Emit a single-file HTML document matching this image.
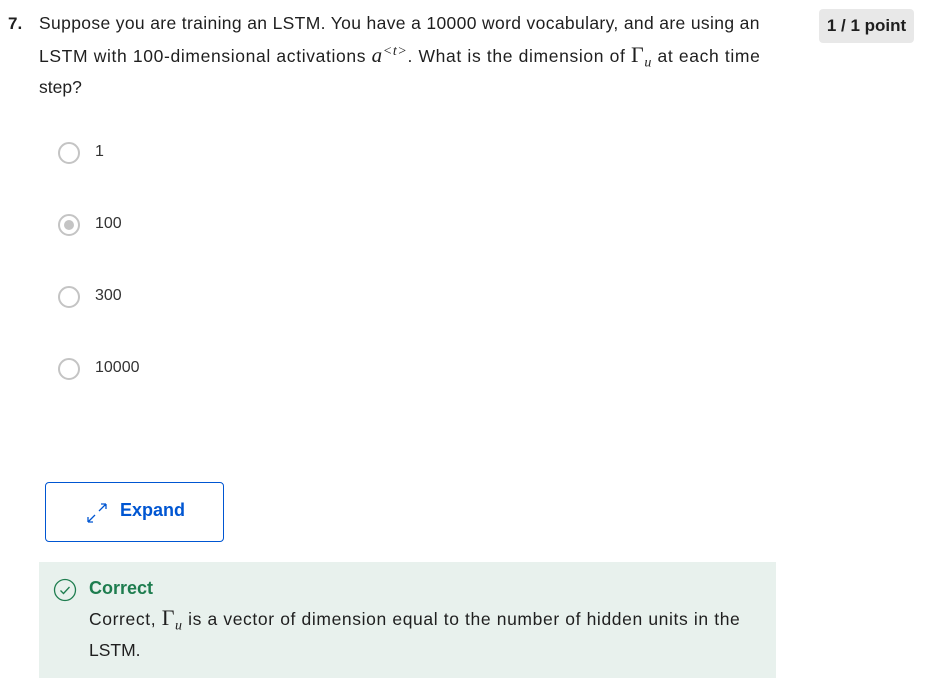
<!DOCTYPE html>
<html><head><style>
body{margin:0;width:925px;height:680px;background:#fff;font-family:"Liberation Sans",sans-serif;color:#1f1f1f;position:relative;overflow:hidden}
.a{position:absolute}
.q{left:39px;top:8px;width:780px;font-size:17.5px;line-height:31px;white-space:nowrap}
.m{font-family:"Liberation Serif",serif;font-style:italic;font-size:21px}
sup,sub{line-height:0}
.r{width:22px;height:22px;border:2px solid #c4c4c4;border-radius:50%;box-sizing:border-box;left:58px}
.lbl{left:95px;font-size:16px;color:#333}
</style></head><body>
<div class="a" style="left:8px;top:8px;font-size:17px;font-weight:bold;line-height:31px">7.</div>
<div class="a q"><span style="letter-spacing:0.35px">Suppose you are training an LSTM. You have a 10000 word vocabulary, and are using an</span><br><span style="letter-spacing:0.64px">LSTM with 100-dimensional activations <span class="m">a</span><sup style="font-family:'Liberation Serif',serif;font-size:14px"><i>&lt;t&gt;</i></sup>. What is the dimension of <span style="font-family:'Liberation Serif',serif;font-size:22px">Γ</span><sub class="m" style="font-size:14px">u</sub> at each time</span><br>step?</div>
<div class="a" style="left:819px;top:9px;width:95px;height:34px;background:#e8e8e8;border-radius:4px;font-size:17px;font-weight:bold;line-height:34px;text-align:center">1 / 1 point</div>
<div class="a r" style="top:142px"></div><div class="a lbl" style="top:143px">1</div>
<div class="a r" style="top:214px"></div><div class="a" style="left:64px;top:220px;width:10px;height:10px;border-radius:50%;background:#c4c4c4"></div><div class="a lbl" style="top:215px">100</div>
<div class="a r" style="top:286px"></div><div class="a lbl" style="top:287px">300</div>
<div class="a r" style="top:358px"></div><div class="a lbl" style="top:359px">10000</div>
<div class="a" style="left:45px;top:482px;width:177px;height:58px;border:1px solid #0056d2;border-radius:4px"></div>
<svg class="a" style="left:86px;top:502px" width="22" height="22" viewBox="0 0 22 22" fill="none" stroke="#0056d2" stroke-width="1.3"><path d="M2 20L9 13M2 20v-5M2 20h5M20 2l-7 7M20 2h-5M20 2v5"/></svg>
<div class="a" style="left:120px;top:500px;font-size:18px;font-weight:bold;color:#0056d2">Expand</div>
<div class="a" style="left:39px;top:562px;width:737px;height:116px;background:#e8f1ed"></div>
<svg class="a" style="left:53px;top:578px" width="24" height="24" viewBox="0 0 24 24" fill="none" stroke="#1e7d4f" stroke-width="1.3"><circle cx="12" cy="12" r="10.5"/><path d="M7.5 12.5l3 3 6-6.5"/></svg>
<div class="a" style="left:89px;top:578px;font-size:18px;font-weight:bold;color:#1e7d4f">Correct</div>
<div class="a" style="left:89px;top:602px;width:690px;font-size:17.5px;line-height:31px;white-space:nowrap"><span style="letter-spacing:0.62px">Correct, <span style="font-family:'Liberation Serif',serif;font-size:22px">Γ</span><sub class="m" style="font-size:14px">u</sub> is a vector of dimension equal to the number of hidden units in the</span><br>LSTM.</div>
</body></html>
